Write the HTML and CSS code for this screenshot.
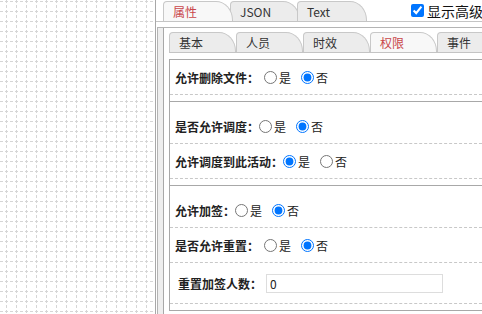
FILE: index.html
```html
<!DOCTYPE html>
<html lang="zh-CN">
<head>
    <meta charset="UTF-8">
    <meta name="viewport" content="width=device-width, initial-scale=1.0">
    <title>节点属性</title>
    <link rel="stylesheet" href="styles.css">
</head>
<body>
    <div class="canvas">
        <svg width="155" height="314">
            <defs>
                <pattern id="grid" width="10" height="10" patternUnits="userSpaceOnUse">
                    <path d="M6.5 0V10" stroke="#d6d6d6" stroke-dasharray="3 2"/>
                    <path d="M0 1.5H10" stroke="#d6d6d6" stroke-dasharray="3 2"/>
                </pattern>
            </defs>
            <rect width="155" height="314" fill="url(#grid)"/>
        </svg>
    </div>

    <div class="panel">
        <div class="tabbar">
            <span class="tab active">属性</span>
            <span class="tab">JSON</span>
            <span class="tab">Text</span>
            <label class="adv"><input type="checkbox" checked>显示高级</label>
        </div>

        <div class="outer">
            <div class="inner">
                <div class="tabbar sub">
                    <span class="tab">基本</span>
                    <span class="tab">人员</span>
                    <span class="tab">时效</span>
                    <span class="tab active">权限</span>
                    <span class="tab">事件</span>
                </div>

                <div class="content">
                    <div class="group first">
                        <div class="row">
                            <span class="lbl spaced">允许删除文件：</span>
                            <label class="opt"><input type="radio" name="delfile">是</label>
                            <label class="opt"><input type="radio" name="delfile" checked>否</label>
                        </div>
                    </div>

                    <div class="group">
                        <div class="row">
                            <span class="lbl">是否允许调度：</span>
                            <label class="opt"><input type="radio" name="dispatch">是</label>
                            <label class="opt"><input type="radio" name="dispatch" checked>否</label>
                        </div>
                        <div class="row">
                            <span class="lbl">允许调度到此活动：</span>
                            <label class="opt"><input type="radio" name="dispatchto" checked>是</label>
                            <label class="opt"><input type="radio" name="dispatchto">否</label>
                        </div>
                    </div>

                    <div class="group">
                        <div class="row">
                            <span class="lbl">允许加签：</span>
                            <label class="opt"><input type="radio" name="addsign">是</label>
                            <label class="opt"><input type="radio" name="addsign" checked>否</label>
                        </div>
                        <div class="row">
                            <span class="lbl spaced">是否允许重置：</span>
                            <label class="opt"><input type="radio" name="reset">是</label>
                            <label class="opt"><input type="radio" name="reset" checked>否</label>
                        </div>
                        <div class="row tall">
                            <span class="lbl indent">重置加签人数：</span>
                            <input type="text" class="num" value="0">
                        </div>
                    </div>
                </div>
            </div>
        </div>
    </div>
</body>
</html>
```

FILE: styles.css
```css
html, body {
    margin: 0;
    height: 314px;
    overflow: hidden;
}

body {
    display: flex;
    font-family: "Noto Sans CJK SC", "Liberation Sans", sans-serif;
    font-size: 12px;
    color: #222;
    background-color: #fff;
}

.canvas {
    width: 155px;
    flex: none;
}

.canvas svg {
    display: block;
}

.panel {
    flex: 1;
    min-width: 0;
    border-left: 1px solid #a8a8a8;
    background-color: #fff;
}

/* tabs */
.tabbar {
    display: flex;
    align-items: flex-end;
    height: 21px;
    padding-left: 7px;
    border-bottom: 1px solid #c4c4c4;
    white-space: nowrap;
}

.tab {
    flex: none;
    width: 59px;
    height: 19px;
    line-height: 19px;
    padding-left: 9px;
    margin-right: -3px;
    border: 1px solid #c8c8c8;
    border-bottom: none;
    border-radius: 4px 0 0 0;
    border-top-right-radius: 17px 19px;
    background-color: #ececec;
    color: #333;
    position: relative;
}

.tab.active {
    background-color: #f8f8f8;
    color: #c9464a;
    z-index: 1;
}

.adv {
    display: flex;
    align-items: center;
    align-self: center;
    margin-left: 47px;
    font-size: 14px;
    color: #111;
}

.adv input {
    margin: 0 3px 0 0;
}

/* nested panels */
.outer {
    margin: 5px 0 0 1px;
    padding-left: 5px;
    border-top: 1px solid #b4b4b4;
    border-left: 1px solid #b4b4b4;
    background-color: #eee;
    height: 300px;
}

.inner {
    height: 100%;
    padding-left: 5px;
    border-left: 1px solid #a8a8a8;
    background-color: #fff;
}

.tabbar.sub {
    height: 24px;
    padding-left: 0;
}

.tabbar.sub .tab {
    width: 56px;
    margin-right: 0;
}

.content {
    margin-top: 6px;
    border-top: 1px solid #a8a8a8;
    border-left: 1px solid #a8a8a8;
}

.group {
    padding: 7px 0 6px;
    border-bottom: 1px solid #a8a8a8;
}

.group.first {
    padding-top: 0;
}

.row {
    display: flex;
    align-items: center;
    height: 34px;
    padding-left: 5px;
    border-bottom: 1px dashed #c8c8c8;
}

.row.tall {
    height: 40px;
}

.lbl {
    font-weight: bold;
}

.lbl.spaced {
    margin-right: 5px;
}

.lbl.indent {
    margin-left: 3px;
    margin-right: 4px;
}

.opt {
    display: flex;
    align-items: center;
}

.opt + .opt {
    margin-left: 10px;
}

.opt input {
    margin: 0 2px 0 0;
}

.num {
    width: 169px;
    height: 17px;
    padding: 0 3px;
    border: 1px solid #ddd;
    font-family: inherit;
    font-size: 12px;
    color: #222;
}
```
